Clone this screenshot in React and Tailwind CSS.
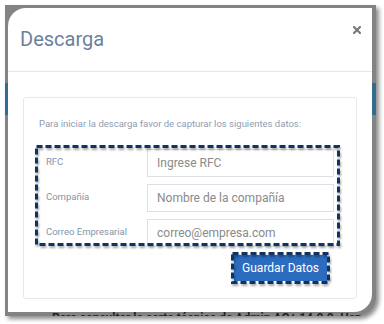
import React from 'react';

function Dashed({ w, h, className }) {
  return (
    <svg
      width={w}
      height={h}
      className={className}
      style={{ filter: 'drop-shadow(1px 2px 1px rgba(0,0,0,0.35))' }}
    >
      <rect x="1.5" y="1.5" width={w - 3} height={h - 3} fill="none" stroke="#0e3465" strokeWidth="3" strokeDasharray="6 3" />
    </svg>
  );
}

export default function App() {
  const fields = [
    { label: 'RFC', placeholder: 'Ingrese RFC' },
    { label: 'Compañía', placeholder: 'Nombre de la compañía' },
    { label: 'Correo Empresarial', placeholder: 'correo@empresa.com' },
  ];

  return (
    <div className="w-[384px] h-[324px] bg-white overflow-hidden pl-[5px] pt-[5px] font-['Roboto',sans-serif]">
      {/* dimmed page behind the modal */}
      <div className="relative w-[371px] h-[311px] p-[3px] pr-[4px] pb-[4px] bg-[#838383] rounded-br-[20px] shadow-[3px_3px_4px_rgba(0,0,0,0.45)] overflow-hidden">
        <div className="absolute inset-x-0 top-[78px] h-[32px] bg-[#356c8c]" />
        <p className="absolute left-[47px] bottom-[-9px] text-[12px] leading-[14px] font-bold text-[#222] whitespace-nowrap">
          Para consultar la carta técnica de Admin AQ+ 14.0.0. Haz clic aquí
        </p>

        {/* modal */}
        <div className="relative h-full bg-white rounded-tl-[18px] rounded-br-[18px] flex flex-col">
          <div className="h-[64px] shrink-0 border-b border-[#e7e7e7] flex justify-between items-start pl-[12px] pr-[11px] pt-[19px]">
            <h1 className="text-[20px] leading-[24px] text-[#6a819d] font-normal">Descarga</h1>
            <svg width="8" height="8" viewBox="0 0 8 8" className="mt-[-1px]">
              <path d="M1 1L7 7M7 1L1 7" stroke="#7a7a7a" strokeWidth="2.2" strokeLinecap="square" />
            </svg>
          </div>

          <div className="px-[15px] pt-[25px]">
            <div className="border border-[#e6e8eb] rounded-[3px] pl-[15px] pr-[22px] pt-[19px] pb-[17px]">
              <p className="text-[9.5px] leading-[14px] text-[#8f9db0]">
                Para iniciar la descarga favor de capturar los siguientes datos:
              </p>

              <div className="relative ml-[7px] mt-[18px] flex flex-col gap-[7px]">
                {fields.map((f) => (
                  <div key={f.label} className="flex items-center">
                    <label className="w-[101px] text-[9.5px] text-[#8594a8] mt-[-2px]">{f.label}</label>
                    <input
                      placeholder={f.placeholder}
                      className="flex-1 h-[28px] border border-[#dde1e6] px-[9px] text-[12px] text-[#555] placeholder:text-[#8a8a8a] outline-none"
                    />
                  </div>
                ))}
                <Dashed w={305} h={101} className="absolute left-[-11px] top-[-4px] pointer-events-none" />
              </div>

              <div className="flex justify-end mt-[8px] mr-[7px]">
                <button className="relative w-[93px] h-[26px] bg-[#2b6cbf] text-white text-[12px]">
                  Guardar Datos
                  <Dashed w={99} h={32} className="absolute left-[-3px] top-[-3px] pointer-events-none" />
                </button>
              </div>
            </div>
          </div>
        </div>
      </div>
    </div>
  );
}
